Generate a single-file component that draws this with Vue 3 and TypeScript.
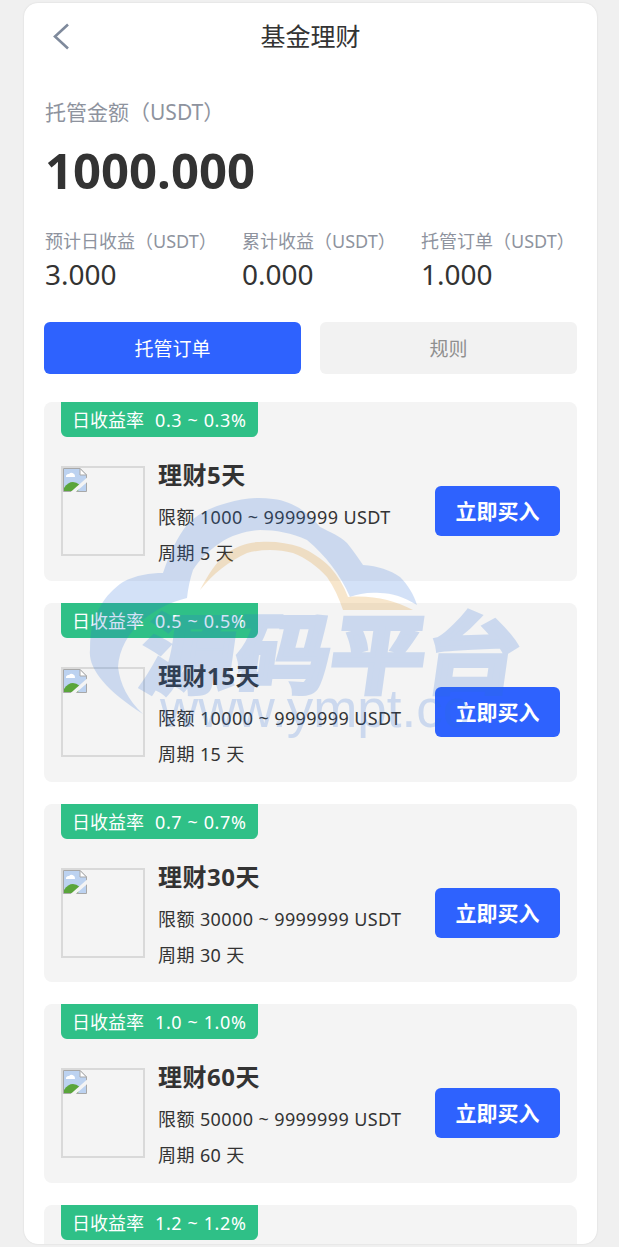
<script setup lang="ts">
const stats = [
  { label: "预计日收益（USDT）", value: "3.000" },
  { label: "累计收益（USDT）", value: "0.000" },
  { label: "托管订单（USDT）", value: "1.000" },
];

const products = [
  { rate: "0.3 ~ 0.3%", name: "理财5天", min: 1000, days: 5 },
  { rate: "0.5 ~ 0.5%", name: "理财15天", min: 10000, days: 15 },
  { rate: "0.7 ~ 0.7%", name: "理财30天", min: 30000, days: 30 },
  { rate: "1.0 ~ 1.0%", name: "理财60天", min: 50000, days: 60 },
  { rate: "1.2 ~ 1.2%", name: "理财90天", min: 100000, days: 90 },
];
</script>

<template>
  <div class="page">
    <div class="phone">
      <header class="nav">
        <svg class="back" width="20" height="28" viewBox="0 0 20 28">
          <path d="M17 1.500 L4 13.500 L17 25.500" fill="none" stroke="#7f8a9c" stroke-width="2.600" />
        </svg>
        <h1>基金理财</h1>
      </header>

      <section class="summary">
        <p class="label">托管金额（USDT）</p>
        <p class="amount">1000.000</p>
        <div class="stats">
          <div v-for="s in stats" :key="s.label" class="stat">
            <p class="stat-label">{{ s.label }}</p>
            <p class="stat-value">{{ s.value }}</p>
          </div>
        </div>
      </section>

      <div class="tabs">
        <button class="tab tab-on">托管订单</button>
        <button class="tab">规则</button>
      </div>

      <ul class="list">
        <li v-for="p in products" :key="p.name" class="card">
          <div class="rate">日收益率<span class="rate-num">{{ p.rate }}</span></div>
          <div class="card-body">
            <div class="thumb">
              <svg width="24" height="24" viewBox="0 0 24 24">
                <path d="M.5.5H17L23.500 7V23.500H.5Z" fill="#bcd2f0" stroke="#a8a8a8" />
                <path d="M17 .5V7H23.500Z" fill="#fff" stroke="#a8a8a8" />
                <path d="M3 9a2.500 2.500 0 0 1 3-3 3.500 3.500 0 0 1 6 3z" fill="#fff" />
                <path d="M1 23V20Q8 10 17 17L15 23Z" fill="#5aa53b" />
                <path d="M9 25L25 11" stroke="#f4f4f4" stroke-width="3.500" />
              </svg>
            </div>
            <div class="info">
              <p class="name">{{ p.name }}</p>
              <p class="line first">限额 {{ p.min }} ~ 9999999 USDT</p>
              <p class="line">周期 {{ p.days }} 天</p>
            </div>
            <button class="buy">立即买入</button>
          </div>
        </li>
      </ul>

      <div class="watermark">
        <svg width="450" height="255" viewBox="80 490 450 255">
          <path
            d="M143 714C105 690 88 668 90 650C90 628 94 616 100 607C106 596 114 588 123 582C136 575 150 573 163 573C170 552 178 536 187 525C198 513 212 507 227 503C243 498 258 497 273 499C292 501 308 512 320 527C330 532 340 536 347 543C353 550 358 558 363 565C378 566 390 570 400 577C408 585 414 595 417 605C404 597 392 593 380 593C368 592 358 594 350 597C340 574 326 556 307 540C292 533 276 530 260 530C246 531 232 535 220 543C208 551 199 560 193 570C190 579 188 588 187 598C170 602 155 610 143 620C128 633 119 650 118 667C120 684 128 700 143 714Z"
            fill="#2b6fd8"
          />
          <path
            d="M200 590C208 575 216 562 227 553C237 546 248 542 260 542C274 541 288 543 300 547C312 552 322 559 330 567C338 576 344 586 348 597C372 595 394 600 413 610L343 610C339 598 334 587 327 577C317 566 306 558 293 553C278 549 262 549 247 553C229 561 213 574 200 590Z"
            fill="#db8405"
          />
          <text transform="translate(138 686) skewX(-8)" class="wm-big" textLength="378" lengthAdjust="spacingAndGlyphs">源码平台</text>
          <text x="160" y="727" class="wm-url">www.ympt.cc</text>
        </svg>
      </div>
    </div>
  </div>
</template>

<style scoped>
.page {
  height: 1247px;
  padding: 3px 22px 3px 24px;
  box-sizing: border-box;
  background: #f0f0f0;
  font-family: "Noto Sans", "Noto Sans CJK SC", sans-serif;
  color: #333;
  overflow: hidden;
}

.phone {
  position: relative;
  height: 100%;
  background: #fff;
  border-radius: 14px;
  box-shadow: 0 0 2px rgba(0, 0, 0, 0.12);
  padding: 0 20px;
  overflow: hidden;
}

.nav {
  position: relative;
  height: 64px;
  display: flex;
  align-items: center;
  justify-content: center;
}

.nav h1 {
  margin: 0;
  font-size: 25px;
  font-weight: 400;
  color: #333;
}

.back {
  position: absolute;
  left: 7px;
  top: 20px;
}

p {
  margin: 0;
}

.summary {
  padding: 30px 0 0 1px;
}

.label {
  font-size: 21px;
  line-height: 30px;
  color: #8e939e;
}

.amount {
  margin-top: 10px;
  font-size: 49px;
  line-height: 66px;
  font-weight: 700;
  color: #333;
}

.stats {
  display: grid;
  grid-template-columns: 197px 179px 1fr;
  margin-top: 25px;
}

.stat-label {
  font-size: 18px;
  line-height: 26px;
  color: #8e939e;
  white-space: nowrap;
}

.stat-value {
  font-size: 28px;
  line-height: 40px;
  color: #333;
}

.tabs {
  display: flex;
  gap: 19px;
  margin-top: 28px;
}

.tab {
  flex: 1;
  height: 52px;
  border: 0;
  border-radius: 6px;
  background: #f2f2f2;
  color: #8f8f8f;
  font: inherit;
  font-size: 19px;
}

.tab-on {
  background: #2e62fe;
  color: #fff;
}

.list {
  list-style: none;
  margin: 28px 0 0;
  padding: 0;
  display: flex;
  flex-direction: column;
  gap: 22px;
}

.card {
  height: 178.750px;
  flex: none;
  box-sizing: border-box;
  background: #f4f4f4;
  border-radius: 8px;
  padding: 0 17px;
}

.rate {
  width: 197px;
  height: 35px;
  box-sizing: border-box;
  padding-left: 11px;
  background: #2fc087;
  color: #fff;
  font-size: 18px;
  line-height: 36px;
  border-radius: 0 0 6px 6px;
  white-space: nowrap;
}

.rate-num {
  margin-left: 11px;
  letter-spacing: 0.6px;
}

.card-body {
  display: flex;
  align-items: flex-start;
  margin-top: 22px;
}

.thumb {
  width: 84px;
  height: 90px;
  margin-top: 7px;
  box-sizing: border-box;
  border: 2px solid #d9d9d9;
  flex: none;
  line-height: 0;
}

.info {
  flex: 1;
  margin-left: 13px;
  min-width: 0;
}

.name {
  font-size: 24px;
  line-height: 32px;
  font-weight: 700;
  letter-spacing: 0.5px;
  color: #333;
}

.line {
  margin-top: 6px;
  font-size: 18px;
  line-height: 30px;
  letter-spacing: 0.4px;
  color: #333;
  white-space: nowrap;
}

.line.first {
  margin-top: 11px;
}

.buy {
  width: 125px;
  height: 50px;
  flex: none;
  margin-top: 27px;
  padding: 0 0 2px;
  border: 0;
  border-radius: 6px;
  background: #2e62fe;
  color: #fff;
  font: inherit;
  font-size: 21px;
  font-weight: 700;
}

.watermark {
  position: absolute;
  left: 56px;
  top: 487px;
  line-height: 0;
  opacity: 0.2;
  pointer-events: none;
}

.wm-big {
  font-size: 86px;
  font-weight: 700;
  fill: #2b6fd8;
  stroke: #2b6fd8;
  stroke-width: 5px;
  font-family: "Noto Sans CJK SC", sans-serif;
}

.wm-url {
  font-size: 53px;
  fill: #2b6fd8;
  font-family: "Liberation Sans", sans-serif;
}
</style>
